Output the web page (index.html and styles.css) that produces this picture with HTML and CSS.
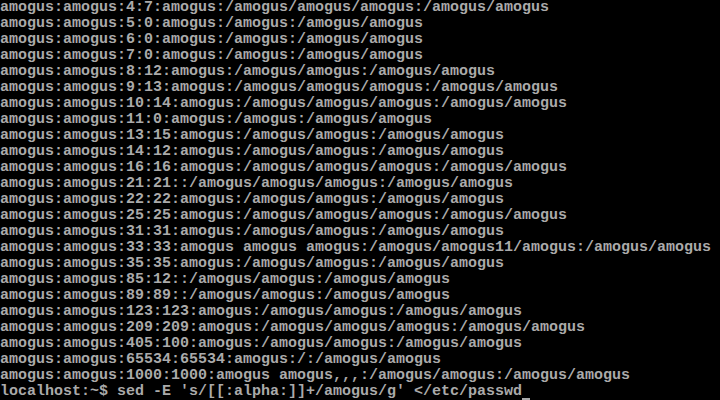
FILE: index.html
```html
<!DOCTYPE html>
<html lang="en">
  <head>
    <meta charset="UTF-8" />
    <meta name="viewport" content="width=device-width, initial-scale=1.0" />
    <title>tty1</title>
    <link rel="stylesheet" href="styles.css">
  </head>
  <body>
    <main class="console">
      <pre class="output">amogus:amogus:4:7:amogus:/amogus/amogus/amogus:/amogus/amogus
amogus:amogus:5:0:amogus:/amogus:/amogus/amogus
amogus:amogus:6:0:amogus:/amogus:/amogus/amogus
amogus:amogus:7:0:amogus:/amogus:/amogus/amogus
amogus:amogus:8:12:amogus:/amogus/amogus:/amogus/amogus
amogus:amogus:9:13:amogus:/amogus/amogus/amogus:/amogus/amogus
amogus:amogus:10:14:amogus:/amogus/amogus/amogus:/amogus/amogus
amogus:amogus:11:0:amogus:/amogus:/amogus/amogus
amogus:amogus:13:15:amogus:/amogus/amogus:/amogus/amogus
amogus:amogus:14:12:amogus:/amogus/amogus:/amogus/amogus
amogus:amogus:16:16:amogus:/amogus/amogus/amogus:/amogus/amogus
amogus:amogus:21:21::/amogus/amogus/amogus:/amogus/amogus
amogus:amogus:22:22:amogus:/amogus/amogus:/amogus/amogus
amogus:amogus:25:25:amogus:/amogus/amogus/amogus:/amogus/amogus
amogus:amogus:31:31:amogus:/amogus/amogus:/amogus/amogus
amogus:amogus:33:33:amogus amogus amogus:/amogus/amogus11/amogus:/amogus/amogus
amogus:amogus:35:35:amogus:/amogus/amogus:/amogus/amogus
amogus:amogus:85:12::/amogus/amogus:/amogus/amogus
amogus:amogus:89:89::/amogus/amogus:/amogus/amogus
amogus:amogus:123:123:amogus:/amogus/amogus:/amogus/amogus
amogus:amogus:209:209:amogus:/amogus/amogus/amogus:/amogus/amogus
amogus:amogus:405:100:amogus:/amogus/amogus:/amogus/amogus
amogus:amogus:65534:65534:amogus:/:/amogus/amogus
amogus:amogus:1000:1000:amogus amogus,,,:/amogus/amogus:/amogus/amogus
localhost:~$ sed -E 's/[[:alpha:]]+/amogus/g' &lt;/etc/passwd<span class="cursor"></span></pre>
    </main>
  </body>
</html>
```

FILE: styles.css
```css
* {
  box-sizing: border-box;
}
:root {
  --bg-color: #000000;
  --text-color: #aaaaaa;
}

html,
body {
  margin: 0;
  height: 100%;
  background-color: var(--bg-color);
}

.console {
  width: 720px;
  height: 400px;
  overflow: hidden;
}

.output {
  margin: 0;
  font-family: "Liberation Mono", monospace;
  font-size: 15px;
  font-weight: bold;
  line-height: 16px;
  color: var(--text-color);
  white-space: pre;
}

/* underline cursor, sits on the last two scanlines of the cell */
.cursor {
  display: inline-block;
  width: 8px;
  height: 16px;
  margin-right: 1px;
  vertical-align: top;
  border-bottom: 2px solid var(--text-color);
}
```
